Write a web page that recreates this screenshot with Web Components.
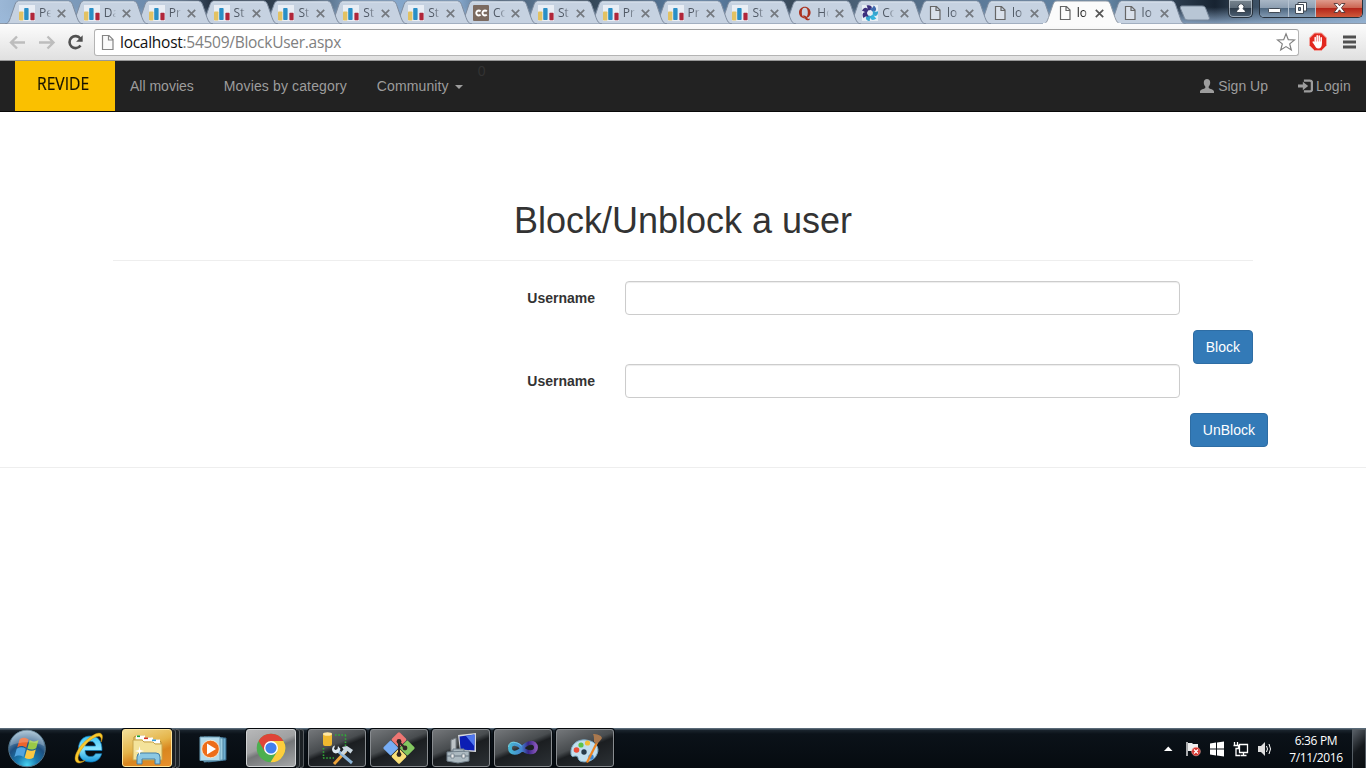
<!DOCTYPE html>
<html lang="en">
<head>
<meta charset="utf-8">
<title>Block User</title>
<style>
html,body{margin:0;height:100%}
body{width:1366px;height:768px;overflow:hidden;background:#fff;font-family:"Liberation Sans",Arial,sans-serif;font-size:14px;color:#333}
</style>
</head>
<body>
<desktop-screen></desktop-screen>
<script>
const make = (name, html) => customElements.define(name, class extends HTMLElement {
  constructor() {
    super();
    const t = document.createElement('template');
    t.innerHTML = typeof html === 'function' ? html(this) : html;
    this.attachShadow({ mode: 'open' }).appendChild(t.content.cloneNode(true));
  }
});

/* ---------- favicons ---------- */
const blade = 'M-3.500-7.500C0-8.500 2-7 1.800-5L.8-3-3.600-2.200C-2.200-4.200-2.200-6-3.500-7.500z';
const FAV = {
  chart: '<rect width="16" height="16" fill="#e9eef5"/><rect x="0" y="6.500" width="4.400" height="9" rx=".8" fill="#e3c262"/><rect x="5.200" y="3" width="4.400" height="12" rx=".8" fill="#2a8fc6"/><rect x="11.400" y="7.800" width="4.200" height="7.400" rx=".8" fill="#b0263a"/>',
  cc: '<rect width="16" height="16" rx="1" fill="#7b6a60"/><path d="M7.600 6.300a2.500 2.500 0 1 0 0 3.400M13.800 6.300a2.500 2.500 0 1 0 0 3.400" fill="none" stroke="#fff" stroke-width="1.900"/>',
  q: '<path fill-rule="evenodd" d="M7.800 1.800C4.600 1.800 2 4.300 2 7.600s2.600 5.800 5.800 5.800 5.800-2.500 5.800-5.800S11 1.800 7.800 1.800zm0 1c2.200 0 3 2 3 4.800s-.8 4.800-3 4.800-3-2-3-4.800.8-4.800 3-4.800z" fill="#ab3320"/><path d="M6 10.500c2.300-.5 3.200.7 4 2.300.6 1.200 1.700 1.400 2.300.6l.7.600c-.7 1.600-3.600 1.900-4.600-.1-.6-1.300-1.200-2.300-2.400-2.300z" fill="#ab3320"/>',
  swirl: '<rect width="16" height="16" fill="#e6edf4"/><g transform="translate(8 8)">' + ['#3b2f7d','#3e68ad','#35a5cf','#35b5dd','#35a5cf','#3b2f7d','#3b2f7d'].map((c, i) => `<path transform="rotate(${i * 51.4})" d="${blade}" fill="${c}"/>`).join('') + '</g>',
  page: '<path d="M3.500 1.500h6l3.500 3.500v9.500h-9.500zM9 1.500v4h4" fill="#fff" fill-opacity=".35" stroke="#666" stroke-width="1.200"/>'
};

make('browser-tab', el => {
  const on = el.hasAttribute('active');
  return `<style>
:host{display:block;flex:none;width:78px;height:24px;margin-right:-13.150px;position:relative;z-index:${on ? 50 : el.getAttribute('z')}}
.shape{position:absolute;inset:0}
.row{position:relative;display:flex;align-items:center;height:24px;padding:2px 0 0 14px;box-sizing:border-box}
.fav{width:16px;height:16px;flex:none}
.t{font:12px/16px "Open Sans","Noto Sans",sans-serif;width:12px;margin-left:4px;overflow:hidden;white-space:nowrap;color:${on ? '#111' : '#515a66'};-webkit-mask-image:linear-gradient(90deg,#000 55%,transparent 102%)}
.x{width:9px;height:9px;margin-left:6px}
</style>
<svg class="shape" width="78" height="24"><path d="M0 24C3.500 23.500 4 21.500 5.500 17.500L10 4.500C11 1.800 12 1 14 1H63C65.500 1 66.500 2 67.500 4.500L72 17.500C73.500 21.500 74.500 23.500 78 24z" fill="${on ? '#fbfbfb' : '#c6d2e1'}" stroke="${on ? '#9099a5' : '#7e8c9f'}" stroke-width="1"/>${on ? '<path d="M0 24h78" stroke="#fbfbfb" stroke-width="2"/>' : '<path d="M13 2h51" stroke="#dbe4ef"/>'}</svg>
<div class="row"><svg class="fav" viewBox="0 0 16 16">${FAV[el.getAttribute('icon')]}</svg><div class="t"><slot></slot></div>
<svg class="x" viewBox="0 0 9 9"><path d="M.8.800l7.400 7.400M8.200.800L.8 8.200" stroke="${on ? '#555' : '#74797f'}" stroke-width="1.700"/></svg></div>`;
});

make('window-controls', `<style>
:host{display:flex;width:135px;height:18px;gap:6px}
div{box-sizing:border-box;height:18px;border:1px solid #27313c;border-top:0;border-radius:0 0 5px 5px;box-shadow:inset 0 0 0 1px #d5dfe999;overflow:hidden;display:flex}
.u{width:25px;background:linear-gradient(#78858f,#5d6b78 45%,#2d3b49 50%,#4d6175);justify-content:center}
.g{width:104px}
.g svg{flex:none;border-right:1px solid #b5c2d0}
.m{background:linear-gradient(#a9b7c6,#8d9fb2 45%,#506982 50%,#8199b1)}
.c{background:linear-gradient(#df9b8c,#cc6653 45%,#b4261a 50%,#cf5a3b)}
</style>
<div class="u"><svg width="24" height="17"><path d="M7.500 12.500c0-2.500 1.500-3.200 2.600-3.600a2.900 2.900 0 1 1 3.800 0c1.100.4 2.600 1.100 2.600 3.600z" fill="#fff" stroke="#303b48" stroke-width=".9"/></svg></div>
<div class="g"><svg class="m" width="28" height="17"><rect x="8.500" y="8.500" width="12" height="4" rx=".8" fill="#fff" stroke="#414a55"/></svg>
<svg class="m" width="26" height="17"><path d="M9 2.500h8.500v8.500H9z" fill="#fff" stroke="#414a55"/><path d="M6.500 4.500h8v9h-8z" fill="#fff" stroke="#414a55"/><path d="M9.500 7.500h2v3h-2z" fill="#8297ad" stroke="#414a55"/></svg>
<svg class="c" width="47" height="17"><path d="M18 3.500h3.500l2 2.300 2-2.300H29l-3.600 4.300 3.600 4.700h-3.500l-2-2.700-2 2.700H18l3.600-4.700z" fill="#fff" stroke="#513637" stroke-width=".9"/></svg></div>`);

const tabs = [['chart','Pe'],['chart','Da'],['chart','Pr'],['chart','St'],['chart','St'],['chart','St'],['chart','St'],['cc','Co'],['chart','St'],['chart','Pr'],['chart','Pr'],['chart','St'],['q','Ho'],['swirl','Co'],['page','lo'],['page','lo'],['page','lo'],['page','lo']];
make('tab-strip', `<style>
:host{display:flex;height:24px;padding-left:5px;box-sizing:border-box;position:relative;
background:linear-gradient(180deg,transparent 30%,#9cbadbcc 100%),linear-gradient(90deg,#9bb7d6 0,#7f9dbd 60px,#6c8bad 150px,#4c6178 185px,#1f2b3a 215px,#384858 300px,#86a8cc 360px,#82a4c8 460px,#42566b 500px,#5a7590 540px,#31414f 580px,#6086ae 700px,#394a5b 790px,#4b6177 860px,#5f7e9e 1000px,#60819f 1110px,#2a3a4b 1180px,#172331 1215px,#3c5064 1255px,#7c97b2 1366px);box-shadow:inset 0 -1px #8c98a7}
.new{margin:5px 0 0 6.500px;flex:none;position:relative}
window-controls{position:absolute;right:3px;top:0}
</style>
${tabs.map((t, i) => `<browser-tab z="${30 - i}" icon="${t[0]}"${i === 16 ? ' active' : ''}>${t[1]}</browser-tab>`).join('')}
<svg class="new" width="32" height="16"><path d="M3 1h20c2 0 3 .7 3.700 2.500l3.500 9c.5 1.500 0 2.500-1.700 2.500H9c-2 0-3-.7-3.700-2.500L1.500 3.500C1 1.800 1.500 1 3 1z" fill="#b8c6d5" stroke="#7b8a9c"/></svg>
<window-controls></window-controls>`);

make('address-bar', `<style>
:host{display:flex;align-items:center;box-sizing:border-box;height:37px;padding:0 9px 1px 8px;background:linear-gradient(#fcfcfc,#e0e0e0);border-bottom:1px solid #989898}
.nav{flex:none;width:86px;height:36px}
.box{display:flex;align-items:center;flex:none;width:1205px;height:27px;margin-top:1px;box-sizing:border-box;border:1px solid #b4b4b4;border-top-color:#a0a0a0;border-radius:3px;background:#fff;padding:0 2px 0 6px}
.url{font:15.500px/20px "Open Sans","Noto Sans",sans-serif;color:#808080;margin-left:6px;letter-spacing:-.27px;flex:1;white-space:nowrap}
.url b{font-weight:400;color:#111}
.ab{margin-left:9px;flex:none}.menu{margin-left:15px;flex:none}
</style>
<svg class="nav" viewBox="8 24 86 36"><g fill="none" stroke="#bdbdbd" stroke-width="2.400"><path d="M25 42.500H11M17 36.500l-6 6 6 6M39 42.500h14M47.500 36.500l6 6-6 6"/></g><path d="M80.300 38.500A6 6 0 1 0 80.500 45.500" fill="none" stroke="#505050" stroke-width="2.600"/><path d="M82.700 35.300v6.400h-6.600z" fill="#505050"/></svg>
<div class="box"><svg width="13" height="17" viewBox="0 0 13 17"><path d="M1.500 1.500h6.500l4 4v10h-10.500zM7.500 1.500v4.500h4.500" fill="#fafafa" stroke="#868686" stroke-width="1.200"/></svg>
<div class="url"><b>localhost</b>:54509/BlockUser.aspx</div>
<svg width="20" height="20" viewBox="0 0 20 20"><path d="M10 1.800l2.300 5.900 6.200.3-4.800 3.900 1.600 6.100-5.300-3.400-5.300 3.400 1.600-6.100L1.500 8l6.200-.3z" fill="#fff" stroke="#818181" stroke-width="1.200"/></svg></div>
<svg class="ab" width="20" height="20" viewBox="0 0 20 20"><path d="M6.500 1h7L18.500 6v7.500l-5 5h-7l-5-5V6z" fill="#e2281f" stroke="#f1a19b"/><g fill="none" stroke="#fff" stroke-width="1.500" stroke-linecap="round"><path d="M7.200 11V5.500M9.200 10V3.800M11.200 10V4M13.200 10.500V5.800M5.200 10l2.300 3"/></g><path d="M6.500 9.500h7.400V12c0 2.600-1.300 4.500-3.600 4.500-2 0-3-1.300-3.800-3.700z" fill="#fff"/></svg>
<svg class="menu" width="14" height="14"><path d="M0 2h13M0 7h13M0 12h13" stroke="#505050" stroke-width="2.800"/></svg>`);

make('site-nav', `<style>
:host{display:flex;box-sizing:border-box;height:51px;padding:0 15px;background:#222;border-bottom:1px solid #080808;color:#9d9d9d;font-size:14px;line-height:20px}
.brand{width:100px;height:50px;background:#fac000;color:#161200;box-sizing:border-box;padding:11px 0 0 22px;font:18px/22px "Open Sans","Noto Sans",sans-serif}
.brand span{display:inline-block;transform:scaleX(.87);transform-origin:0 0;-webkit-text-stroke:.2px #161200}
.l{padding:15px;display:flex;align-items:center;height:20px;white-space:nowrap}
.caret{border:4px solid transparent;border-top-color:#9d9d9d;border-bottom:0;margin-left:6px;margin-top:2px}
.n{color:#333;flex:1;height:20px}
.l svg{margin-right:4px}
</style>
<div class="brand"><span>REVIDE</span></div><div class="l">All movies</div><div class="l" style="letter-spacing:.135px">Movies by category</div><div class="l" style="letter-spacing:.12px">Community<i class="caret"></i></div><div class="n">0</div>
<div class="l"><svg width="14" height="14" viewBox="0 0 14 14"><path d="M7 0c2 0 3.200 1.400 3.200 3.600 0 1.700-.6 3-1.500 3.900v1.400c1 .9 5.300 1.500 5.300 3.600V14H0v-1.500c0-2.100 4.300-2.700 5.300-3.600V7.500C4.400 6.600 3.800 5.300 3.800 3.600 3.800 1.400 5 0 7 0z" fill="#9d9d9d"/></svg>Sign Up</div>
<div class="l" style="padding-right:0;letter-spacing:.15px"><svg width="15" height="14" viewBox="0 0 14 14" preserveAspectRatio="none" style="margin-right:3px"><path d="M5.500 1.600H11c1.200 0 2 .8 2 2v6.800c0 1.200-.8 2-2 2H5.500" fill="none" stroke="#9d9d9d" stroke-width="2.200"/><path d="M0 5.400h4.500V2.800L9.500 7l-5 4.200V8.600H0z" fill="#9d9d9d"/></svg>Login</div>`);

make('text-field', `<style>
:host{display:flex;justify-content:flex-end;width:1067px;margin-left:113px;gap:30px;height:34px}
label{font-weight:700;line-height:20px;padding-top:7px}
input{box-sizing:border-box;width:555px;height:34px;border:1px solid #ccc;border-radius:4px;padding:6px 12px;background:#fff;box-shadow:inset 0 1px 1px rgba(0,0,0,.075);font:inherit}
</style><label><slot></slot></label><input aria-label="Username">`);

make('action-button', `<style>
:host{display:block}
button{display:block;box-sizing:border-box;height:34px;padding:6px 12px;border:1px solid #2e6da4;border-radius:4px;background:#337ab7;color:#fff;font:14px/20px "Liberation Sans",Arial,sans-serif}
</style><button><slot></slot></button>`);

make('block-page', `<style>
:host{display:block;height:616px;padding-top:89px;box-sizing:border-box;background:#fff}
h1{font-size:36px;font-weight:500;line-height:40px;margin:0;text-align:center}
.rule{height:1px;background:#eee}
.act{display:flex;justify-content:flex-end;margin-top:15px}
</style>
<h1>Block/Unblock a user</h1>
<div class="rule" style="margin:19px 113px 20px"></div>
<text-field>Username</text-field>
<div class="act" style="padding-right:113px"><action-button>Block</action-button></div>
<text-field>Username</text-field>
<div class="act" style="padding-right:98px"><action-button>UnBlock</action-button></div>
<div class="rule" style="margin-top:20px"></div>`);

/* ---------- taskbar ---------- */
make('task-button', el => `<style>
:host{display:flex;height:40px;flex:none}
.b{box-sizing:border-box;width:${el.getAttribute('w')}px;height:38px;margin-top:1px;border:1px solid ${el.getAttribute('edge') || '#888c90'};border-radius:3px;display:flex;align-items:center;justify-content:center;
background:${el.getAttribute('fill') || 'linear-gradient(158deg,#74777a 0,#484c4f 42%,#1b1e21 52%,#2c3135 100%)'};box-shadow:0 0 0 1px #05090d}
.s{width:3px;height:37px;margin-top:1px;border:1px solid #555a5e;border-left:0;background:#1b2024;border-radius:0 3px 3px 0}
</style><div class="b"><slot></slot></div>${el.hasAttribute('stack') ? '<div class="s"></div><div class="s"></div>' : ''}`);

make('task-bar', `<style>
:host{display:flex;height:40px;position:relative;box-sizing:border-box;background:linear-gradient(#596a78 0,#596a78 1px,#1b252e 2px,#0b1219 6px,#060b10 100%);align-items:flex-start}
svg{flex:none;display:block}
.clock{width:64px;color:#fff;font:12px/17px "Open Sans","Noto Sans",sans-serif;letter-spacing:-.35px;text-align:center;padding-top:4px}
.tray{display:flex;margin-left:auto;height:40px}
.sd{width:12px;height:38px;border:1px solid #555d64;background:linear-gradient(135deg,#596068,#15191d 50%,#090c0f);margin:1px 0 0 4px}
</style>
<svg width="54" height="40" viewBox="0 0 54 40"><defs><radialGradient id="o" cx=".5" cy=".95" r=".95"><stop offset="0" stop-color="#48d3f1"/><stop offset=".3" stop-color="#1a79ae"/><stop offset=".6" stop-color="#1d4f80"/><stop offset="1" stop-color="#9fbdd0"/></radialGradient></defs><circle cx="27" cy="20.500" r="18.300" fill="url(#o)" stroke="#52758b"/><g transform="translate(-2.500 -4) scale(1.150)"><path d="M19.300 13.300c2.600-1.800 5-1.700 7.700.1L25 20.600c-2.700-1.800-5-1.800-7.900-.2z" fill="#ee642d"/><path d="M28 14c2.700 1.600 5 1.500 7.700-.1l-2 7c-2.700 1.700-5 1.700-7.700.3z" fill="#99c947"/><path d="M16.700 21.500c2.800-1.600 5.200-1.600 7.900.1l-2 7c-2.700-1.700-5-1.700-7.900 0z" fill="#51a4df"/><path d="M25.600 22.200c2.700 1.600 5 1.500 7.700 0l-2 7.100c-2.700 1.600-5 1.600-7.700 0z" fill="#fac843"/></g><path d="M10 18a17 16 0 0 1 34 0c-9-5-25-5-34 0z" fill="#fff" opacity=".22"/></svg>
<svg width="68" height="40" viewBox="54 0 68 40"><defs><linearGradient id="ie" x2="0" y2="1"><stop stop-color="#3dc3f4"/><stop offset=".5" stop-color="#8de7ff"/><stop offset="1" stop-color="#1697dc"/></linearGradient></defs><path d="M102 22.500H85c.3 4.500 2.500 6 5.500 6 2.500 0 4-.8 5-2.800h6.200C100 31.500 96 34 90.500 34 83 34 78.500 29.500 78.500 21S83.500 8 90.500 8c7.500 0 11.800 5 11.500 14.500zM95.500 18c-.3-3-2-4.700-5-4.700s-5 1.700-5.400 4.700z" fill="url(#ie)" stroke="#0c79b8" stroke-width=".7"/><path d="M77 34.500c-5-3.500.5-15 9.500-22.500C93 6.500 99 3.500 101.500 6c1.500 1.600 1.200 4.500-.3 8 .2-3 0-5-1.500-5.500-2.500-1-8 2-13.500 7.500-6.500 6.600-9.500 13.500-7.500 16.500 1 1.500 3.500 1.200 6.500-.2-3 2.600-6.300 3.300-8.200 2.200z" fill="#f9c92c" stroke="#c98d12" stroke-width=".5"/></svg>
<task-button w="50" edge="#ffe59a" fill="linear-gradient(160deg,#f2df9a 0,#e5b54a 45%,#d9861f 65%,#e8902c 100%)" stack><svg width="34" height="34" viewBox="0 0 34 34"><path d="M4 29V6l2-1h8l2 2h5l2 2h6l2 2v18z" fill="#e9cf78" stroke="#b18d39"/><path d="M6 4.500h9v4H6zM13 6.500h10v4H13zM21 8.500h9v4h-9z" fill="#fff"/><path d="M7 4.500h3v1.600H7z" fill="#17a333"/><path d="M14 6.500h4v1.600h-4z" fill="#d33323"/><path d="M22 8.500h4v1.600h-4z" fill="#3ba2da"/><path d="M3 9h9l2 2h9l2 2h7v16H3z" fill="#f4e39b" stroke="#c7a44c"/><path d="M7 33v-7q0-4 4-4h15q4 0 4 4v7h-5v-5H12v5z" fill="#8bc8e3" stroke="#477fa4"/><path d="M9.500 15l.8 4 4 1-4 1-.8 4-.8-4-4-1 4-1z" fill="#fff"/></svg></task-button>
<svg width="66" height="40" viewBox="179 0 66 40"><path d="M207 9l18 1v22l-18 2z" fill="#6eaed0" stroke="#315f7e"/><path d="M203 9l19 1v22l-19 2z" fill="#9dcee2" stroke="#4c82a0"/><path d="M199 9h20v23.500h-20z" fill="#b4dbeb" stroke="#6da0b9"/><circle cx="209.500" cy="21" r="8.800" fill="#ed6d19" stroke="#fff2d9" stroke-width=".8"/><path d="M206 15.500l9 5.500-9 5.500z" fill="#fff"/></svg>
<task-button w="50" edge="#d0d2d4" fill="linear-gradient(158deg,#b7b8b9 0,#9fa0a1 43%,#747678 53%,#a5a7a8 100%)" stack><svg width="30" height="30" viewBox="0 0 30 30"><circle cx="15" cy="15" r="14.300" fill="#4caf50"/><path d="M2.600 7.900A14.300 14.300 0 0 1 27.400 7.900H15L8.800 18.500z" fill="#df4437"/><path d="M27.400 7.900A14.300 14.300 0 0 1 14.500 29.300l6.700-10.800L21 8z" fill="#fdcd3d"/><path d="M15 7.900h12.400L21 16z" fill="#fdcd3d"/><circle cx="15" cy="15" r="7" fill="#fff"/><circle cx="15" cy="15" r="5.600" fill="#427fed"/></svg></task-button>
<div style="display:flex;gap:4px;margin-left:4px">
<task-button w="58"><svg width="36" height="36" viewBox="0 0 36 36"><path d="M16 5h11M26.500 5v11M4.500 18v10M4 28h11" stroke="#31ab37" stroke-width="1.600" stroke-dasharray="1.600 1.600" fill="none"/><rect x="4" y="3" width="9" height="13" rx="2" fill="#efb82f"/><ellipse cx="8.500" cy="4" rx="4.500" ry="1.800" fill="#ffe7a3"/><path d="M15 34l12-13" stroke="#eda33b" stroke-width="3"/><path d="M19 21l14 12" stroke="#8cb5d8" stroke-width="3"/><path d="M13 19c0 4 4 6 7 3l1.500-3-2.500-3-.5 3-2 1-1.500-1 1-3.500c-2 .5-3 2-3 4.500z" fill="#dce8f1"/><path d="M23 17l5-1 6 4-2.500 3.500-3-2.500-4 4-3-2 3-3.500z" fill="#cbd8e1"/></svg></task-button>
<task-button w="58"><svg width="34" height="34" viewBox="0 0 34 34"><g transform="translate(17 17) rotate(45)"><rect x="-11.500" y="-11.500" width="11.200" height="11.200" rx="1.500" fill="#ed7673"/><rect x=".3" y="-11.500" width="11.200" height="11.200" rx="1.500" fill="#83c760"/><rect x="-11.500" y=".3" width="11.200" height="11.200" rx="1.500" fill="#77adf5"/><rect x=".3" y=".3" width="11.200" height="11.200" rx="1.500" fill="#f8df78"/></g><path d="M17 10v14M17 11l6 6" stroke="#302724" stroke-width="2"/><circle cx="17" cy="10.500" r="2.400" fill="#302724"/><circle cx="23" cy="17" r="2.400" fill="#302724"/><circle cx="17" cy="23.500" r="2.400" fill="#302724"/></svg></task-button>
<task-button w="58"><svg width="34" height="34" viewBox="0 0 34 34"><path d="M7 9l5-2v13H7z" fill="#bdc3c7" stroke="#747c82"/><path d="M14 4l18-2v19l-16-1z" fill="#d5d8dc"/><path d="M15.500 5.500l15-2v16l-14-1z" fill="#0b1eb4"/><path d="M22 5l8.500-1.500v12z" fill="#4f77ef"/><path d="M9 21v-3h11v3M3 21l22-1v10l-11 2-11-2z" fill="#acb9c0" stroke="#707f8a"/><path d="M3 25h22" stroke="#687782"/><path d="M7 23h3v4H7zM18 23h3v4h-3z" fill="#eee" stroke="#687782" stroke-width=".7"/></svg></task-button>
<task-button w="58"><svg width="34" height="28" viewBox="0 0 34 28"><defs><linearGradient id="v"><stop stop-color="#47b5d3"/><stop offset=".45" stop-color="#4384ce"/><stop offset=".7" stop-color="#392589"/><stop offset="1" stop-color="#8654b7"/></linearGradient></defs><path d="M16 14C12.500 9 4 8 4 14s8 6.500 12.500 0S30 7 30 13.500 20 19.500 16 14z" fill="none" stroke="url(#v)" stroke-width="4"/><path d="M2.500 13c0-7 9-5.500 13-1" stroke="#8de6ef" stroke-width=".7" fill="none"/></svg></task-button>
<task-button w="58"><svg width="36" height="34" viewBox="0 0 36 34"><path d="M4 23C3 13 11 8 19 9c10 1 14 8 11 14-3 8-13 9-17 7-3-2-1-5-4-5s-4 2-5-2z" fill="#c1deee" stroke="#7cabc6"/><circle cx="9.500" cy="19" r="2.800" fill="#ea4c38"/><circle cx="14" cy="14" r="2.600" fill="#5cc348"/><circle cx="20.500" cy="12" r="2.600" fill="#f2bd35"/><circle cx="17" cy="21" r="2.700" fill="#273b4b"/><circle cx="24" cy="26" r="2.700" fill="#3b88d5"/><path d="M29 11l2 1-10 20-2-1z" fill="#ed8522"/><path d="M27 11c0-4 0-6-1-8 4 0 8 1 9 4-1 2-3 4-5 6z" fill="#a9784e"/></svg></task-button>
</div>
<div class="tray"><svg width="125" height="40" viewBox="1159 0 125 40"><path d="M1164 23h8.500l-4.200-4.500z" fill="#fff"/><g fill="none" stroke="#fff" stroke-width="1.300"><path d="M1187 14v14"/><path d="M1239.500 16.500h8v8h-8zM1240.500 27.500h6M1243.500 25v2.500M1234.500 14v3M1237.500 14v3M1233.500 17.500h5v3h-2.500v7h4"/><path d="M1266.500 18q2 3 0 6M1269 16q3 5 0 10" stroke-width="1"/></g><path d="M1188 15h4l1 1h5v8h-5l-1-1h-4z" fill="#eee"/><circle cx="1196" cy="23.500" r="4.300" fill="#d8342e" stroke="#f5b6ac" stroke-width=".6"/><path d="M1194 21.500l4 4M1198 21.500l-4 4" stroke="#fff" stroke-width="1.300"/><path d="M1210 15.500l6-1v6h-6zM1217 14.400l7-1v7.100h-7zM1210 21.500h6v6l-6-.9zM1217 21.500h7v7l-7-1z" fill="#fff"/><path d="M1258 18h3l4-4v14l-4-4h-3z" fill="#ddd"/></svg>
<div class="clock">6:36 PM<br>7/11/2016</div><div class="sd"></div></div>`);

make('desktop-screen', `<style>:host{display:flex;flex-direction:column;width:1366px;height:768px;overflow:hidden}</style>
<tab-strip></tab-strip><address-bar></address-bar><site-nav></site-nav><block-page></block-page><task-bar></task-bar>`);
</script>
</body>
</html>
